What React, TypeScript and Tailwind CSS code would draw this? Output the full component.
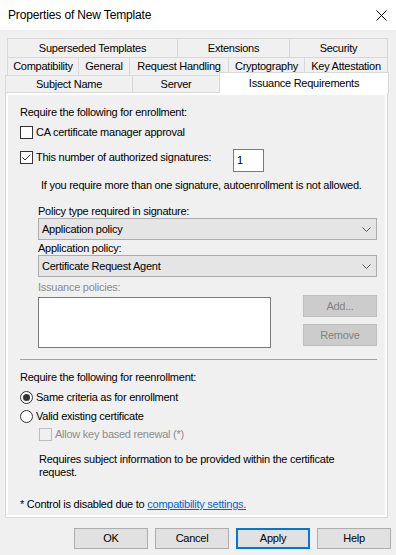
import React from 'react';
import clsx from 'clsx';

const row1 = [
  { label: 'Superseded Templates', cls: 'w-[170px]' },
  { label: 'Extensions', cls: 'w-[112px]' },
  { label: 'Security', cls: 'w-[99px] border-r' },
];

const row2 = [
  { label: 'Compatibility', cls: 'w-[71px]' },
  { label: 'General', cls: 'w-[51px]' },
  { label: 'Request Handling', cls: 'w-[99px]' },
  { label: 'Cryptography', cls: 'w-[76px]' },
  { label: 'Key Attestation', cls: 'w-[84px] border-r' },
];

const Tab: React.FC<{ label: string; className?: string }> = ({ label, className }) => (
  <div
    className={clsx(
      'flex h-full items-center justify-center border-l border-t border-[#d9d9d9] bg-[#f0f0f0] whitespace-nowrap',
      className
    )}
  >
    {label}
  </div>
);

const Checkbox: React.FC<{ checked?: boolean; disabled?: boolean }> = ({ checked, disabled }) => (
  <div
    className={clsx(
      'flex h-[13px] w-[13px] shrink-0 items-center justify-center border',
      disabled ? 'border-[#bcbcbc] bg-[#f0f0f0]' : 'border-[#333333] bg-white'
    )}
  >
    {checked && (
      <svg width="11" height="11" viewBox="0 0 11 11">
        <polyline points="1.5,5.5 4,8 9.5,2.5" fill="none" stroke="#333333" strokeWidth="1" />
      </svg>
    )}
  </div>
);

const Radio: React.FC<{ checked?: boolean }> = ({ checked }) => (
  <div className="flex h-[13px] w-[13px] shrink-0 items-center justify-center rounded-full border border-[#333333] bg-white">
    {checked && <div className="h-[7px] w-[7px] rounded-full bg-[#333333]" />}
  </div>
);

const Select: React.FC<{ value: string }> = ({ value }) => (
  <div className="ml-[18px] flex h-[22px] w-[339px] items-center justify-between border border-[#acacac] bg-[#e5e5e5] pl-[3px] pr-[5px]">
    <span>{value}</span>
    <svg width="9" height="5" viewBox="0 0 9 5">
      <polyline points="0.5,0.5 4.5,4.5 8.5,0.5" fill="none" stroke="#555555" strokeWidth="1" />
    </svg>
  </div>
);

const DlgButton: React.FC<{ label: string; primary?: boolean }> = ({ label, primary }) => (
  <div
    className={clsx(
      'flex h-[21px] w-[74px] items-center justify-center bg-[#e1e1e1]',
      primary ? 'border-2 border-[#0078d7]' : 'border border-[#adadad]'
    )}
  >
    {label}
  </div>
);

export default function App() {
  return (
    <div className="h-[555px] w-[396px] overflow-hidden bg-[#f0f0f0] font-['Liberation_Sans',Arial,sans-serif] text-[11px] tracking-[-0.25px] text-black">
      {/* title bar */}
      <div className="flex h-[30px] items-center justify-between bg-white pl-[8px] pr-[8px]">
        <span className="text-[12px] tracking-[-0.15px]">Properties of New Template</span>
        <svg width="11" height="11" viewBox="0 0 11 11" className="mr-[1px]">
          <line x1="0.5" y1="0.5" x2="10.5" y2="10.5" stroke="#000" strokeWidth="1" />
          <line x1="10.5" y1="0.5" x2="0.5" y2="10.5" stroke="#000" strokeWidth="1" />
        </svg>
      </div>

      {/* tabs */}
      <div className="mt-[8px]">
        <div className="ml-[7px] flex h-[19px]">
          {row1.map((t) => (
            <Tab key={t.label} label={t.label} className={t.cls} />
          ))}
        </div>
        <div className="ml-[7px] flex h-[18px]">
          {row2.map((t) => (
            <Tab key={t.label} label={t.label} className={t.cls} />
          ))}
        </div>
        <div className="ml-[5px] flex h-[17px] items-start">
          <Tab label="Subject Name" className="w-[127px]" />
          <Tab label="Server" className="w-[87px]" />
          <div className="relative z-10 -mt-[3px] flex h-[21px] w-[170px] items-start justify-center border-l border-r border-t border-[#d9d9d9] bg-white pt-[2px]">
            Issuance Requirements
          </div>
        </div>
      </div>

      {/* tab page */}
      <div className="ml-[5px] h-[426px] w-[383px] border border-[#d9d9d9] bg-white p-[2px]">
        <div className="flex h-full flex-col bg-[#f0f0f0] pl-[12px]">
          <div className="mt-[10px] h-[14px] leading-[14px]">Require the following for enrollment:</div>

          <div className="mt-[7px] flex h-[13px] items-center gap-[3px] leading-[13px]">
            <Checkbox />
            <span>CA certificate manager approval</span>
          </div>

          <div className="mt-[10px] flex h-[23px] items-start">
            <div className="mt-[2px] flex w-[213px] items-center gap-[3px] leading-[13px]">
              <Checkbox checked />
              <span>This number of authorized signatures:</span>
            </div>
            <div className="flex h-[23px] w-[31px] items-center border border-[#7a7a7a] bg-white pl-[3px]">1</div>
          </div>

          <div className="ml-[21px] mt-[6px] h-[14px] leading-[14px]">
            If you require more than one signature, autoenrollment is not allowed.
          </div>

          <div className="ml-[18px] mt-[12px] h-[14px] leading-[14px]">Policy type required in signature:</div>
          <Select value="Application policy" />

          <div className="ml-[18px] mt-[2px] h-[13px] leading-[13px]">Application policy:</div>
          <Select value="Certificate Request Agent" />

          <div className="ml-[18px] mt-[3px] h-[14px] leading-[14px] text-[#8c8c8c]">Issuance policies:</div>

          <div className="mt-[1px] flex items-start">
            <div className="ml-[18px] mt-[2px] h-[51px] w-[233px] border border-[#7a7a7a] bg-white" />
            <div className="ml-[32px] flex flex-col gap-[7px]">
              <div className="flex h-[22px] w-[74px] items-center justify-center border border-[#bfbfbf] bg-[#cccccc] text-[#838383]">
                Add...
              </div>
              <div className="flex h-[22px] w-[74px] items-center justify-center border border-[#bfbfbf] bg-[#cccccc] text-[#838383]">
                Remove
              </div>
            </div>
          </div>

          <div className="mt-[11px] h-px w-[357px] bg-[#a0a0a0]" />

          <div className="mt-[10px] h-[14px] leading-[14px]">Require the following for reenrollment:</div>

          <div className="mt-[7px] flex h-[13px] items-center gap-[3px] leading-[13px]">
            <Radio checked />
            <span>Same criteria as for enrollment</span>
          </div>
          <div className="mt-[6px] flex h-[13px] items-center gap-[3px] leading-[13px]">
            <Radio />
            <span>Valid existing certificate</span>
          </div>
          <div className="ml-[19px] mt-[5px] flex h-[13px] items-center gap-[3px] leading-[13px] text-[#8c8c8c]">
            <Checkbox disabled />
            <span>Allow key based renewal (*)</span>
          </div>

          <div className="ml-[19px] mt-[12px] w-[320px] leading-[13px]">
            Requires subject information to be provided within the certificate request.
          </div>

          <div className="mt-[18px] h-[14px] leading-[14px]">
            * Control is disabled due to{' '}
            <span className="text-[#0066cc] underline">compatibility settings.</span>
          </div>
        </div>
      </div>

      {/* dialog buttons */}
      <div className="mt-[10px] flex justify-end gap-[7px] pr-[5px]">
        <DlgButton label="OK" />
        <DlgButton label="Cancel" />
        <DlgButton label="Apply" primary />
        <DlgButton label="Help" />
      </div>
    </div>
  );
}
